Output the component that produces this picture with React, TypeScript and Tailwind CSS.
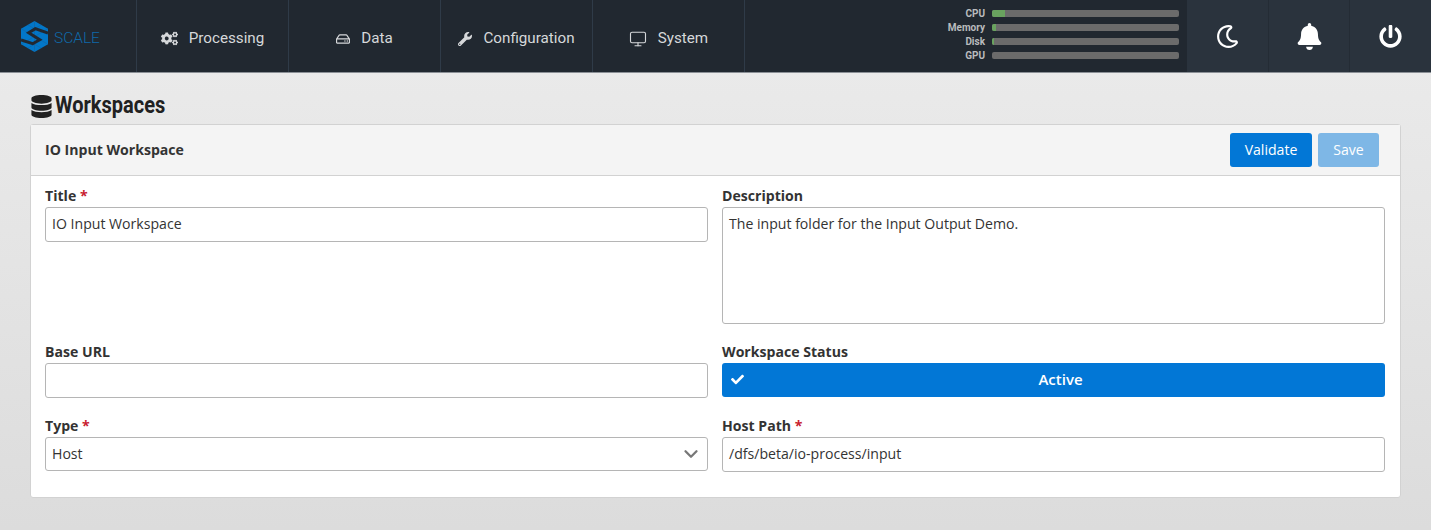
import { ChevronDown, Monitor } from 'lucide-react';
import { FaBell, FaCheck, FaCogs, FaDatabase, FaPowerOff, FaRegHdd, FaRegMoon, FaWrench } from 'react-icons/fa';
import type { ReactNode } from 'react';

const meters = [
  { label: 'CPU', width: 'w-[7%]' },
  { label: 'Memory', width: 'w-[2%]' },
  { label: 'Disk', width: 'w-[1%]' },
  { label: 'GPU', width: 'w-0' },
];

function Logo() {
  return (
    <svg width="27" height="31" viewBox="0 0 27 31" className="shrink-0">
      <path fill="#0277c8" d="M13.5 0 L27 7.75 L27 23.25 L13.5 31 L0 23.25 L0 7.75 Z" />
      {/* facets */}
      <path stroke="#1a5f96" strokeWidth="0.5" fill="none" d="M0 7.75 L13.5 15.5 L27 7.75 M13.5 0 L13.5 31 M0 23.25 L13.5 15.5 L27 23.25 M6.75 3.9 L20.25 11.6 M20.25 3.9 L6.75 11.6 M6.75 27.1 L20.25 19.4 M20.25 27.1 L6.75 19.4" />
      {/* negative S */}
      <path stroke="#212830" strokeWidth="3" fill="none" d="M27 12 L14.3 7.7 L7.7 11.7 L18.7 18.7 L11.7 22.7 L0 19" />
    </svg>
  );
}

function NavItem({ icon, label }: { icon: ReactNode; label: string }) {
  return (
    <div className="w-[152px] h-full flex items-center justify-center gap-[11px] pt-[5px] border-r border-[#2f3b48] text-[#d6d8da] text-[15.2px]">
      {icon}
      <span>{label}</span>
    </div>
  );
}

function Label({ text, required }: { text: string; required?: boolean }) {
  return (
    <div className="pt-[1px] mb-[1px] text-[14.1px] leading-[20px] font-bold text-[#333333]">
      {text}
      {required && <span className="text-[#c8202f]"> *</span>}
    </div>
  );
}

function TextField({ value }: { value: string }) {
  return (
    <div className="h-[35px] px-[6px] pb-[2px] flex items-center bg-white border border-[#b5b5b5] rounded-[3px] text-[14.1px] text-[#333333]">
      {value}
    </div>
  );
}

export default function App() {
  return (
    <div className="w-[1431px] h-[530px] overflow-hidden flex flex-col bg-gradient-to-b from-[#ececec] to-[#dcdcdc] font-['Open_Sans',sans-serif]">
      {/* top bar */}
      <header className="h-[73px] shrink-0 flex bg-[#212830] border-b border-[#8b9096] font-['Roboto',sans-serif]">
        <div className="w-[137px] h-full flex items-center gap-[6px] pl-[21px] border-r border-[#2f3b48]">
          <Logo />
          <span className="pt-[5px] text-[#0f68a8] text-[15.5px] font-light">SCALE</span>
        </div>
        <NavItem icon={<FaCogs size={17} />} label="Processing" />
        <NavItem icon={<FaRegHdd size={14} />} label="Data" />
        <NavItem icon={<FaWrench size={14} />} label="Configuration" />
        <NavItem icon={<Monitor size={18} strokeWidth={1.5} />} label="System" />

        <div className="flex-1 flex flex-col justify-center items-end gap-[7px] pr-[8px] pb-[3px]">
          {meters.map((m) => (
            <div key={m.label} className="flex items-center gap-[7px] h-[7px]">
              <span className="text-[10px] font-bold text-[#b9bbbd] leading-none">{m.label}</span>
              <div className="w-[187px] h-[7px] rounded-[2px] bg-[#6b6b6b] overflow-hidden">
                <div className={`h-full bg-[#69a35f] ${m.width}`} />
              </div>
            </div>
          ))}
        </div>

        <div className="w-[244px] flex bg-[#2a333d] text-white">
          <div className="flex-1 flex items-center justify-center border-r border-[#242c35]">
            <FaRegMoon size={23} />
          </div>
          <div className="flex-1 flex items-center justify-center border-r border-[#242c35]">
            <FaBell size={27} />
          </div>
          <div className="flex-1 flex items-center justify-center">
            <FaPowerOff size={23} />
          </div>
        </div>
      </header>

      <main className="px-[30px] pt-[17px]">
        <div className="h-[32px] mb-[2px] flex items-center gap-[2px] text-[#212121]">
          <FaDatabase size={23} />
          <h1 className="origin-left scale-x-[0.87] font-['Roboto',sans-serif] font-bold text-[23px]">Workspaces</h1>
        </div>

        {/* workspace card */}
        <div className="w-[1371px] bg-white border border-[#d2d2d2] rounded-[3px]">
          <div className="h-[51px] flex items-center justify-between pl-[14px] pr-[21px] bg-[#f4f4f4] border-b border-[#d2d2d2]">
            <span className="text-[14.1px] font-bold text-[#333333]">IO Input Workspace</span>
            <div className="flex gap-[6px]">
              <button className="h-[34px] w-[82px] rounded-[3px] bg-[#0277d6] text-white text-[14.1px]">Validate</button>
              <button className="h-[34px] w-[61px] rounded-[3px] bg-[#7eb7e6] text-white text-[14.1px]">Save</button>
            </div>
          </div>

          <div className="grid grid-cols-2 gap-x-[14px] pl-[14px] pr-[15px] pt-[9px] pb-[25px]">
            <div className="h-[156px]">
              <Label text="Title" required />
              <TextField value="IO Input Workspace" />
            </div>
            <div className="h-[156px]">
              <Label text="Description" />
              <div className="h-[117px] px-[6px] py-[6px] bg-white border border-[#b5b5b5] rounded-[3px] text-[14.1px] leading-[20px] text-[#333333]">
                The input folder for the Input Output Demo.
              </div>
            </div>

            <div className="h-[74px]">
              <Label text="Base URL" />
              <TextField value="" />
            </div>
            <div className="h-[74px]">
              <Label text="Workspace Status" />
              <div className="relative h-[34px] flex items-center justify-center rounded-[3px] bg-[#0277d6] text-white text-[15px] font-semibold pl-[14px] pb-[2px]">
                <FaCheck size={13} className="absolute left-[9px] top-[10px]" />
                Active
              </div>
            </div>

            <div>
              <Label text="Type" required />
              <div className="h-[34px] pl-[6px] pr-[5px] pb-[1px] flex items-center justify-between bg-white border border-[#b5b5b5] rounded-[3px] text-[14.1px] text-[#333333]">
                Host
                <ChevronDown size={22} strokeWidth={2.5} className="text-[#777777]" />
              </div>
            </div>
            <div>
              <Label text="Host Path" required />
              <TextField value="/dfs/beta/io-process/input" />
            </div>
          </div>
        </div>
      </main>
    </div>
  );
}
